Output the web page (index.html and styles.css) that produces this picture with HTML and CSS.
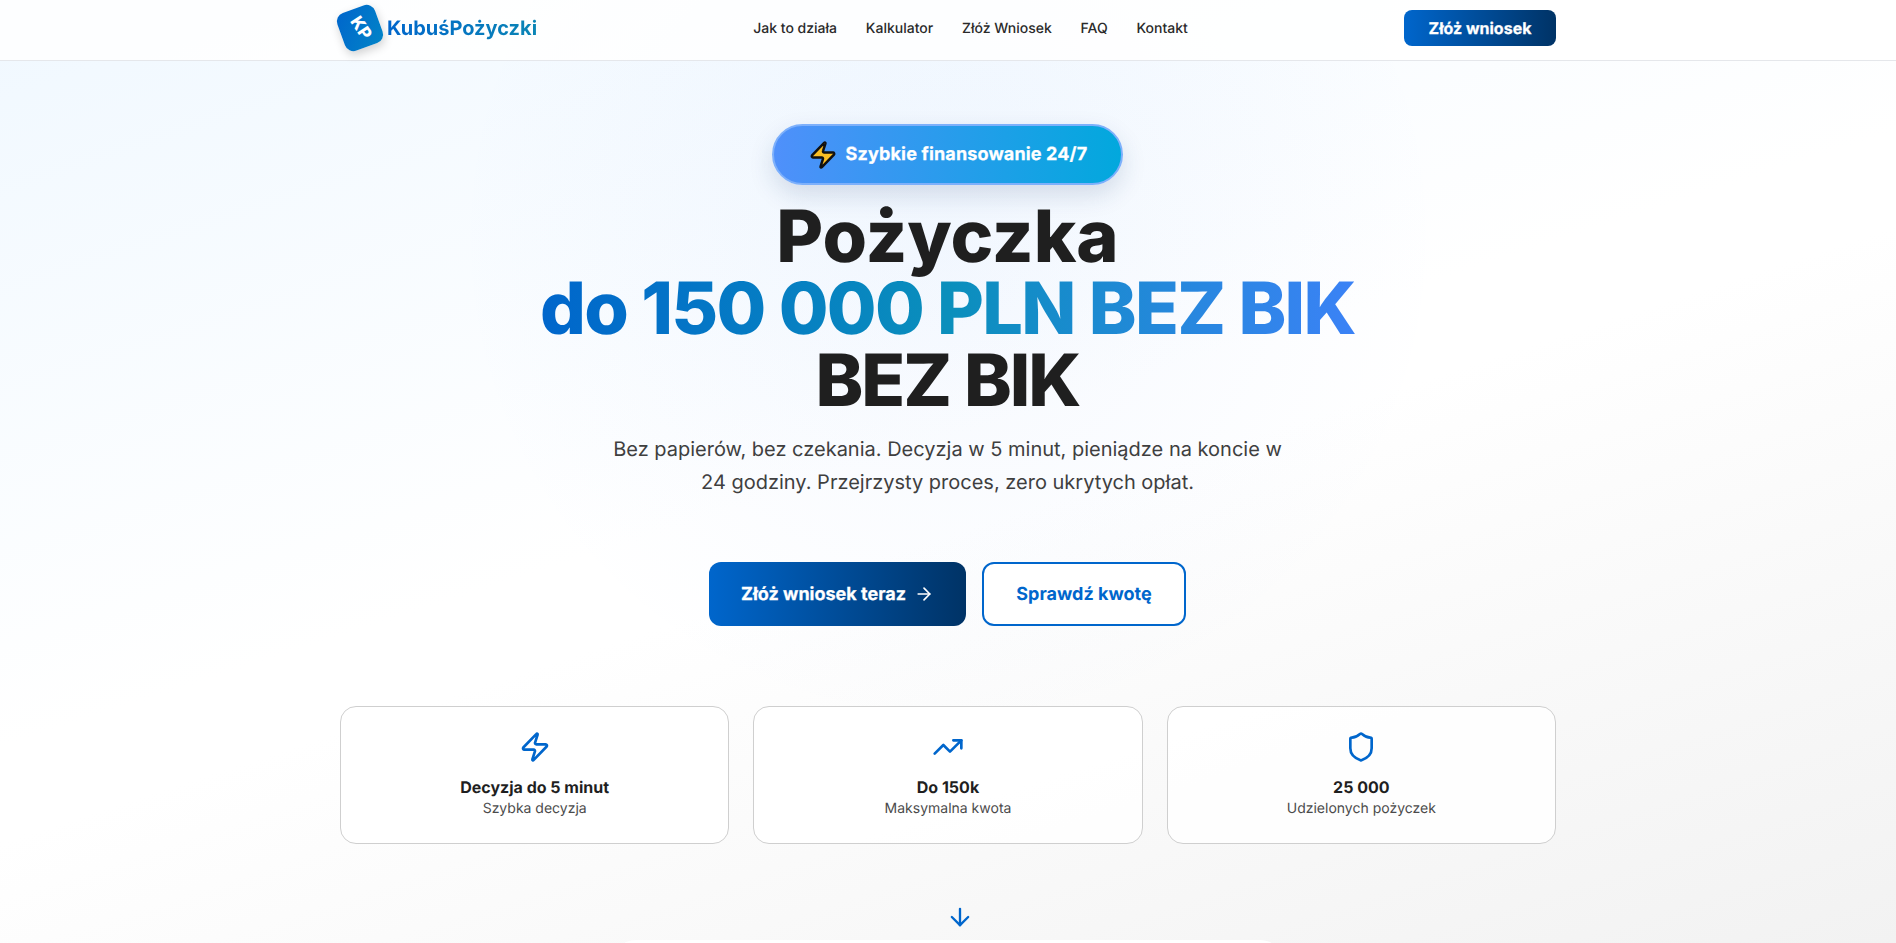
FILE: index.html
```html
<!DOCTYPE html>
<html lang="pl">
<head>
    <meta charset="UTF-8">
    <meta name="viewport" content="width=device-width, initial-scale=1.0">
    <title>KubuśPożyczki</title>
    <link rel="stylesheet" href="styles.css">
</head>
<body>
    <header class="navbar">
        <div class="navbar-inner">
            <a class="logo" href="#">
                <span class="logo-tile"><span class="logo-letters">KP</span></span>
                <span class="logo-text">KubuśPożyczki</span>
            </a>
            <nav class="nav-links">
                <a href="#">Jak to działa</a>
                <a href="#">Kalkulator</a>
                <a href="#">Złóż Wniosek</a>
                <a href="#">FAQ</a>
                <a href="#">Kontakt</a>
            </nav>
            <a class="nav-cta" href="#">Złóż wniosek</a>
        </div>
    </header>

    <main class="hero">
        <div class="badge">
            <svg class="badge-icon" viewBox="0 0 24 24" fill="#fbbf24" stroke="#111" stroke-width="2" stroke-linejoin="round" stroke-linecap="round">
                <path d="M4 14a1 1 0 0 1-.78-1.63l9.9-10.2a.5.5 0 0 1 .86.46l-1.92 6.02A1 1 0 0 0 13 10h7a1 1 0 0 1 .78 1.63l-9.9 10.2a.5.5 0 0 1-.86-.46l1.92-6.02A1 1 0 0 0 11 14z"/>
            </svg>
            <span>Szybkie finansowanie 24/7</span>
        </div>

        <h1 class="headline">
            <span class="headline-line">Pożyczka</span>
            <span class="headline-line headline-accent">do 150 000 PLN BEZ BIK</span>
            <span class="headline-line headline-tight">BEZ BIK</span>
        </h1>

        <p class="lead">Bez papierów, bez czekania. Decyzja w 5 minut, pieniądze na koncie w 24 godziny. Przejrzysty proces, zero ukrytych opłat.</p>

        <div class="actions">
            <a class="btn btn-primary" href="#">
                Złóż wniosek teraz
                <svg class="btn-icon" viewBox="0 0 24 24" fill="none" stroke="currentColor" stroke-width="2" stroke-linecap="round" stroke-linejoin="round">
                    <path d="M5 12h14"/>
                    <path d="m12 5 7 7-7 7"/>
                </svg>
            </a>
            <a class="btn btn-outline" href="#">Sprawdź kwotę</a>
        </div>

        <div class="features">
            <div class="feature">
                <svg class="feature-icon" viewBox="0 0 24 24" fill="none" stroke="currentColor" stroke-width="2" stroke-linecap="round" stroke-linejoin="round">
                    <path d="M4 14a1 1 0 0 1-.78-1.63l9.9-10.2a.5.5 0 0 1 .86.46l-1.92 6.02A1 1 0 0 0 13 10h7a1 1 0 0 1 .78 1.63l-9.9 10.2a.5.5 0 0 1-.86-.46l1.92-6.02A1 1 0 0 0 11 14z"/>
                </svg>
                <div class="feature-title">Decyzja do 5 minut</div>
                <div class="feature-label">Szybka decyzja</div>
            </div>
            <div class="feature">
                <svg class="feature-icon" viewBox="0 0 24 24" fill="none" stroke="currentColor" stroke-width="2" stroke-linecap="round" stroke-linejoin="round">
                    <path d="m22 7-8.5 8.5-5-5L2 17"/>
                    <path d="M16 7h6v6"/>
                </svg>
                <div class="feature-title">Do 150k</div>
                <div class="feature-label">Maksymalna kwota</div>
            </div>
            <div class="feature">
                <svg class="feature-icon" viewBox="0 0 24 24" fill="none" stroke="currentColor" stroke-width="2" stroke-linecap="round" stroke-linejoin="round">
                    <path d="M20 13c0 5-3.5 7.5-7.66 8.95a1 1 0 0 1-.67-.01C7.5 20.5 4 18 4 13V6a1 1 0 0 1 1-1c2 0 4.5-1.2 6.24-2.72a1.17 1.17 0 0 1 1.52 0C14.51 3.81 17 5 19 5a1 1 0 0 1 1 1z"/>
                </svg>
                <div class="feature-title">25 000</div>
                <div class="feature-label">Udzielonych pożyczek</div>
            </div>
        </div>

        <svg class="scroll-arrow" viewBox="0 0 24 24" fill="none" stroke="currentColor" stroke-width="2" stroke-linecap="round" stroke-linejoin="round">
            <path d="M12 5v14"/>
            <path d="m19 12-7 7-7-7"/>
        </svg>

        <div class="calculator"></div>
    </main>
</body>
</html>
```

FILE: styles.css
```css
* {
    box-sizing: border-box;
}

html {
    height: 943px;
    overflow: hidden;
}

body {
    margin: 0;
    height: 943px;
    overflow: hidden;
    font-family: 'Inter', sans-serif;
    text-rendering: geometricPrecision;
    color: #1f1f1f;
    background:
        radial-gradient(circle at 50% 25%, rgba(59, 130, 246, 0.05), rgba(59, 130, 246, 0) 42%),
        linear-gradient(162deg, #f0f8ff 0%, #ffffff 48%, #ffffff 54%, #f2f2f2 100%);
}

a {
    text-decoration: none;
    color: inherit;
}

.navbar {
    height: 61px;
    background-color: rgba(255, 255, 255, 0.85);
    border-bottom: 1px solid #e5e7eb;
}

.navbar-inner {
    max-width: 1216px;
    height: 56px;
    margin: 0 auto;
    display: flex;
    align-items: center;
    justify-content: space-between;
}

.logo {
    display: flex;
    align-items: center;
    gap: 7px;
}

.logo-tile {
    width: 40px;
    height: 40px;
    border-radius: 9px;
    display: flex;
    align-items: center;
    justify-content: center;
    background: linear-gradient(135deg, #0066cc, #0284c7);
    box-shadow: 0 4px 10px rgba(0, 0, 0, 0.18);
    transform: rotate(-20deg);
}

.logo-letters {
    color: #fff;
    font-size: 17px;
    line-height: 1;
    font-weight: 800;
    transform: rotate(76deg);
}

.logo-text {
    font-size: 20px;
    font-weight: 700;
    background: linear-gradient(90deg, #0066cc, #0a85b5);
    -webkit-background-clip: text;
    background-clip: text;
    color: transparent;
}

.nav-links {
    display: flex;
    gap: 28.8px;
    font-size: 14px;
    font-weight: 500;
    color: #2a2a2a;
}

.nav-cta {
    width: 152px;
    height: 36px;
    border-radius: 8px;
    display: flex;
    align-items: center;
    justify-content: center;
    font-size: 16px;
    font-weight: 700;
    -webkit-text-stroke: 0.25px #fff;
    color: #fff;
    background: linear-gradient(90deg, #0066cc, #003366);
}

.hero {
    display: flex;
    flex-direction: column;
    align-items: center;
    padding-top: 63px;
    padding-right: 1px;
}

.badge {
    width: 351px;
    height: 61px;
    border-radius: 31px;
    border: 2px solid #7db0fb;
    display: flex;
    align-items: center;
    justify-content: center;
    gap: 8px;
    font-size: 18px;
    font-weight: 700;
    letter-spacing: 0.15px;
    -webkit-text-stroke: 0.25px #fff;
    color: #fff;
    background: linear-gradient(90deg, #4f90fb, #02a8dd);
    box-shadow: 0 10px 24px rgba(30, 58, 110, 0.15);
}

.badge-icon {
    width: 30px;
    height: 30px;
}

.headline {
    margin: 16px 0 0;
    font-size: 72px;
    line-height: 72px;
    font-weight: 800;
    text-align: center;
    color: #1f1f1f;
}

.headline-line {
    display: block;
}

.headline-accent {
    letter-spacing: -1.7px;
    background: linear-gradient(90deg, #0066cc, #0a8fbc 50%, #3b82f6);
    -webkit-background-clip: text;
    background-clip: text;
    color: transparent;
}

.headline-tight {
    letter-spacing: -2px;
}

.lead {
    width: 672px;
    margin: 16px 0 0;
    font-size: 20px;
    line-height: 32.5px;
    text-align: center;
    color: #3f3f3f;
}

.actions {
    display: flex;
    gap: 16px;
    margin-top: 64px;
}

.btn {
    height: 64px;
    border-radius: 12px;
    display: flex;
    align-items: center;
    justify-content: center;
    font-size: 18px;
    font-weight: 700;
}

.btn-primary {
    width: 257px;
    gap: 8px;
    -webkit-text-stroke: 0.25px #fff;
    color: #fff;
    background: linear-gradient(90deg, #0066cc, #003366);
}

.btn-icon {
    width: 20px;
    height: 20px;
}

.btn-outline {
    width: 204px;
    color: #0066cc;
    background-color: #fff;
    border: 2px solid #0066cc;
}

.features {
    width: 1216px;
    display: grid;
    grid-template-columns: repeat(3, 1fr);
    gap: 24px;
    margin-top: 80px;
    margin-right: -1px;
}

.feature {
    height: 138px;
    padding-top: 24px;
    border: 1px solid #cfcfcf;
    border-radius: 16px;
    background-color: rgba(255, 255, 255, 0.85);
    text-align: center;
}

.feature-icon {
    display: block;
    width: 32px;
    height: 32px;
    margin: 0 auto 12px;
    color: #0066cc;
}

.feature-title {
    font-size: 16px;
    line-height: 24px;
    font-weight: 700;
}

.feature-label {
    font-size: 14px;
    line-height: 20px;
    color: #4b4b4b;
}

.scroll-arrow {
    width: 28px;
    height: 28px;
    margin-top: 59px;
    margin-left: 25px;
    color: #0066cc;
}

.calculator {
    width: 672px;
    height: 200px;
    margin-top: 9px;
    background-color: #fff;
    border-radius: 24px;
}
```
